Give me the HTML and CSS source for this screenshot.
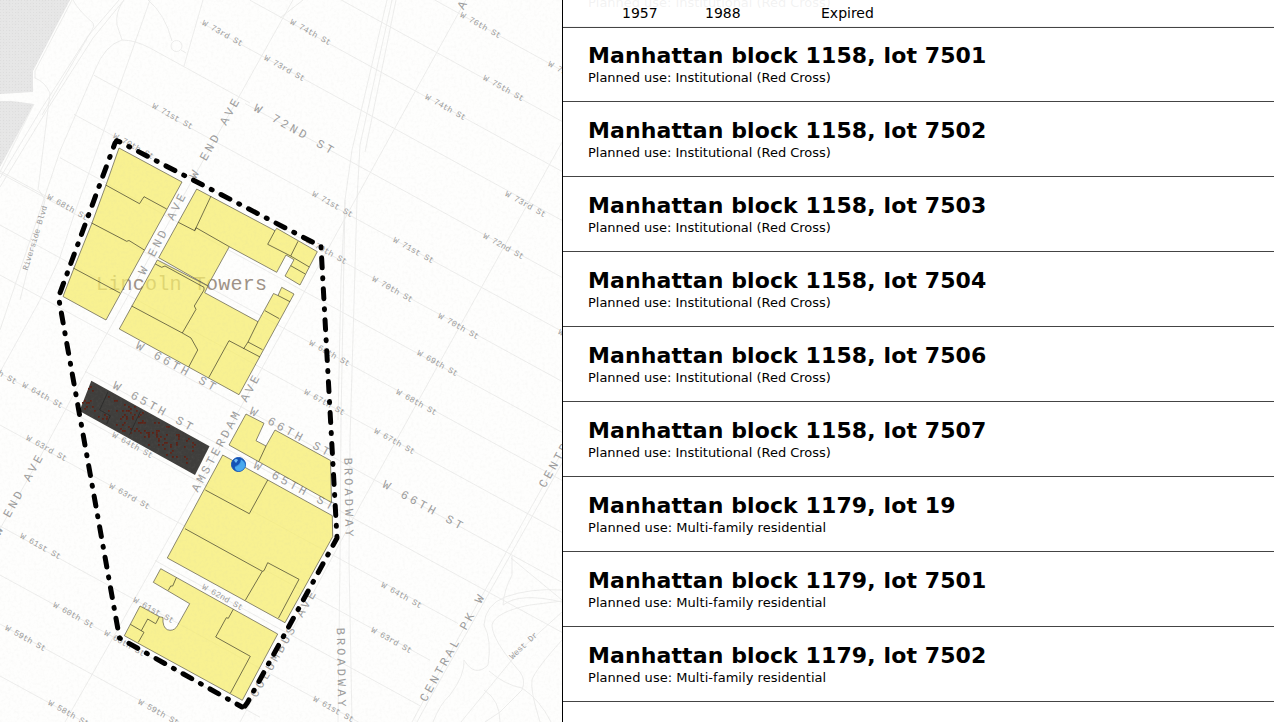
FILE: index.html
```html
<!DOCTYPE html>
<html lang="en">
<head>
<meta charset="utf-8">
<title>Lincoln Square urban renewal plan</title>
<link rel="stylesheet" href="styles.css">
</head>
<body>
<main class="page">
<section class="map">
<svg class="map-svg" viewBox="0 0 562 722" width="562" height="722">
  <defs>
    <filter id="grain" x="0" y="0" width="100%" height="100%">
      <feTurbulence type="fractalNoise" baseFrequency="0.35" numOctaves="2" seed="4"/>
      <feColorMatrix values="0 0 0 0 0.5  0 0 0 0 0.49  0 0 0 0 0.47  0.3 0 0 0 -0.13"/>
    </filter>
    <pattern id="hatch" width="3" height="3" patternUnits="userSpaceOnUse">
      <rect width="3" height="3" fill="#e7e7e7"/><rect width="1" height="1" fill="#dedede"/>
    </pattern>
    <radialGradient id="ball" cx=".6" cy=".65" r=".6"><stop offset=".5" stop-color="#3f9de6"/><stop offset="1" stop-color="#1764c4"/></radialGradient>
  </defs>
  <rect width="562" height="722" fill="#fefefd"/>
  <path fill="url(#hatch)" d="M0 0H70L33 71V92L0 94ZM0 101L12 101L34 104L0 167Z"/>
  <g class="roads" id="streets"></g>
  <g class="roads">
    <path d="M72 0L35 71V78Q45 82 50 93L38 190M34 104L0 172M124 0L93 38L47 110L0 187M119 0L88 36L42 108L0 178M73 0Q78 10 93 23Q95 26 92 30L42 115"/>
    <path d="M150 0L75 212L59 260L40 300L0 372M39 190L45 200L20 300M0 171L62 205M95 70L60 151L0 330M95 70Q105 45 122 40Q135 40 150 48L250 103M117 25L122 40M148 0Q165 14 172 41M203 0L184 66M117 25Q115 12 124 0"/>
    <circle cx="176.500" cy="46" r="5.500"/>
    <path d="M181 50L186 53"/>
    <path d="M303 -18L236 102L195 175L143 269L91 362L39 459L0 529M303 0L280 18M478 -22L463 5L380 155L256 379L197 488L110 643L65 722M562 142L505 245L362 502L312 595L256 693L240 722M562 452L425 698L412 722M566 456L429 700L417 722"/>
    <path d="M387 0L352 150L345 200L341 420L340 560L338 722M392 0L360 145L357 200L350 440L349 560L352 722M396 0L365 152M345 200L341 280L338 420"/>
    <path d="M511 558L562 600M512 556V575Q504 590 503 605Q520 592 562 602M562 590Q530 588 505 597Q485 605 484 625Q492 640 488 665Q475 678 464 660M464 660Q465 675 450 695Q440 704 433 722M562 612L520 650L461 722M492 625Q492 640 520 672Q526 680 522 690L500 712L485 722M484 690Q500 700 500 722M562 640Q535 670 532 680Q530 690 540 722M489 671Q505 685 522 688Q540 700 551 722M492 625Q495 612 530 605L562 601"/>
  </g>
  <g class="street-names" id="names"></g>
  <g class="avenue-names" id="avenues"></g>
  <text class="district" x="96" y="290" textLength="171">Lincoln Towers</text>

  <g class="lots">
    <path d="M119 148L182 182L106 320L63 296.500L74 268L92 223L106 185Z"/>
    <path d="M196.700 189L275 230.700L276.700 228.300L317.300 251.700L309.300 267L300 285L285 276L294 259.700L286 255L276.700 272.300L229.300 246.700L207.700 285.700L158.700 257.700Z"/>
    <path d="M157.300 260L208 286L204.700 292.700L258 321.700L273.500 293.500L278 295.500L281.700 287.300L294 294L239 394.700L119.300 329Z"/>
    <path d="M246 414L264 423.300L256 440.700L266 446L275 430L330.500 460.500L331.500 502.500L229 445Z"/>
    <path d="M222.700 455L332.300 515.700L332.700 536.700L285 622.700L167.300 558Z"/>
    <path d="M160.700 568.700L277.700 634L242.300 700.300L124.300 635.700L140 606L159.300 616.700L163 617.500V622Q164 630 170 630.300Q175 630.300 177.500 625.500L189.700 603.700L153.300 582.300Z"/>
  </g>
  <g class="lot-lines">
    <path d="M105.700 185L139.500 203.700L144 196.700L166.700 209M91.700 223L126.700 241.300L129 240.500L144.300 250M73.300 268L120 293"/>
    <path d="M178.300 222.300L194.700 230.700L196 227.700L229.300 246.700M211 196L194.700 230.700M275 230.700L267.700 244.300L290.700 256L298 241.300M290.700 256L309.300 267M290.700 265.700L305.300 274"/>
    <path d="M155.300 264L161.700 267.300L165 266L204 287.300V290L194.300 306L196 309.300L182.300 333M131.700 306L182.300 333L191 338L197.700 350L188.700 367M208.700 377.700L229 340.700L260 357M258 321.700L248 342L243.500 349M248 342L262.500 349.700M265 310.700L279.300 318.700M278 295.500L290 301.700"/>
    <path d="M266 446L258.700 461.700M205.300 490L249.300 513.700L267.700 480M185 528.700L262.300 571.300L264 570.700L267.700 562.700L299 579.300L278.500 618M262.300 571.300L245.300 600.300"/>
    <path d="M176.300 577.700L172.700 586H170.700L168.300 590.300M233.300 609.300L228.300 618.300L226.300 617.700L215.700 637L250.300 656.300L230.300 693.300M130.300 624.300L144 632.300L138.300 642.300M141.300 630.700L147.700 619L155.700 623.700L159.300 616.700"/>
  </g>
  <path class="lot-dark" d="M91.300 380.700L209.500 446.300L195 475L79.500 411Z"/>
  <g id="specks" class="specks"></g>
  <path class="lot-dark-lines" d="M108 391.700L99.700 410L110.300 415.700L106.700 424M140.300 411.700L129.300 435"/>
  <rect class="grain" width="562" height="722" filter="url(#grain)"/>
  <path class="boundary" stroke-dashoffset="6.500" d="M116.500 141L119 141.500L321 246.500L337 538L247.500 702.500L245 706"/>
  <path class="boundary" stroke-dashoffset="4.300" d="M242 707L119.500 638L58.500 297L115 143L117 141"/>
  <g class="marker">
    <circle cx="238.500" cy="464.500" r="7" fill="#1553b5" stroke="#1553b5"/>
    <path fill="url(#ball)" d="M235 466Q241 465 240 459Q246 460 245.500 466Q243 472 237.500 471Q233 470 235 466Z"/>
    <path fill="#49a9ee" d="M235 467Q242 466 241 459.500Q246 463 244.500 467Q242 471 238 471Q235 470 235 467Z"/>
    <path fill="#6fbcf5" d="M234 460.500Q236 458 238 460L236 463Z"/>
  </g>
</svg>
</section>
<section class="panel">
  <header class="plan-head"><span>1957</span><span>1988</span><span>Expired</span></header>
  <div class="lot-list">
    <article class="lot"><p>Planned use: Institutional (Red Cross)</p></article>
    <article class="lot"><h2>Manhattan block 1158, lot 7501</h2><p>Planned use: Institutional (Red Cross)</p></article>
    <article class="lot"><h2>Manhattan block 1158, lot 7502</h2><p>Planned use: Institutional (Red Cross)</p></article>
    <article class="lot"><h2>Manhattan block 1158, lot 7503</h2><p>Planned use: Institutional (Red Cross)</p></article>
    <article class="lot"><h2>Manhattan block 1158, lot 7504</h2><p>Planned use: Institutional (Red Cross)</p></article>
    <article class="lot"><h2>Manhattan block 1158, lot 7506</h2><p>Planned use: Institutional (Red Cross)</p></article>
    <article class="lot"><h2>Manhattan block 1158, lot 7507</h2><p>Planned use: Institutional (Red Cross)</p></article>
    <article class="lot residential"><h2>Manhattan block 1179, lot 19</h2><p>Planned use: Multi-family residential</p></article>
    <article class="lot residential"><h2>Manhattan block 1179, lot 7501</h2><p>Planned use: Multi-family residential</p></article>
    <article class="lot residential"><h2>Manhattan block 1179, lot 7502</h2><p>Planned use: Multi-family residential</p></article>
  </div>
</section>
</main>
<script src="map.js"></script>
</body>
</html>
```

FILE: styles.css
```css
* { box-sizing: border-box; }
body { margin: 0; background: #fff; color: #000; font-family: "DejaVu Sans", sans-serif; }
.page { display: flex; width: 100%; height: 722px; overflow: hidden; }
.map { flex: 0 0 562px; overflow: hidden; }
.map-svg { display: block; }

.roads { fill: none; stroke: #ebebea; stroke-width: 0.9; }
.street-names text { font: 8.4px "Liberation Mono", monospace; fill: #9c9c9c; text-anchor: middle; dominant-baseline: central; }
.avenue-names text { font: 12px "Liberation Mono", monospace; letter-spacing: 3.05px; fill: #9c9c9c; text-anchor: middle; dominant-baseline: central; }
.district { font: 20px "Liberation Mono", monospace; fill: #9e9287; }
.lots path { fill: rgba(245, 236, 106, 0.74); stroke: #5a5748; stroke-width: 0.7; }
.lot-lines { fill: none; stroke: #3b3928; stroke-width: 0.7; }
.lot-dark { fill: #3f3e3c; }
.lot-dark-lines { fill: none; stroke: #2a2a29; stroke-width: 0.9; }
.specks { fill: #5e2013; }
.grain { opacity: 0.5; pointer-events: none; }
.boundary { fill: none; stroke: #000; stroke-width: 5; stroke-linecap: round; stroke-linejoin: round; stroke-dasharray: 10 10 1 10; }

.panel { position: relative; flex: 1; overflow: hidden; border-left: 1px solid #000; background: #fff; }
.plan-head {
  position: absolute; top: 0; left: 0; right: 0; height: 28px;
  display: grid; grid-template-columns: 83px 116px auto; align-items: start;
  padding: 5px 0 0 59px; border-bottom: 1px solid #444;
  background: rgba(255, 255, 255, 0.95); font-size: 14px; line-height: 16px;
}
.lot-list { margin-top: -48px; }
.lot { display: flex; flex-direction: column; justify-content: flex-end; height: 75px; padding: 0 25px 15px; border-bottom: 1px solid #444; }
.lot h2 { margin: 0; font-size: 22px; line-height: 26px; font-weight: bold; letter-spacing: 0.11px; }
.lot p { margin: 1px 0 0; font-size: 13px; line-height: 16px; letter-spacing: -0.03px; }
.lot.residential p { letter-spacing: 0.04px; }
```

FILE: map.js
```js
const NS = "http://www.w3.org/2000/svg";
function add(parent, tag, attrs, text) {
  const el = document.createElementNS(NS, tag);
  for (const k in attrs) el.setAttribute(k, attrs[k]);
  if (text) el.textContent = text;
  document.getElementById(parent).appendChild(el);
}

// Cross streets: y intercept, start x, end x
[[-237, 430, 562], [-186, 340, 562], [-136, 250, 562], [-87, 200, 562], [-30, 245, 562], [24, 94, 562],
 [74, 74, 562], [125, 60, 562], [173, 0, 562], [225, 0, 562], [275, 0, 562], [325, 85, 562],
 [373, 0, 458], [425, 0, 430], [476, 155, 420], [526, 0, 360], [575, 0, 260], [624, 0, 190], [676, 0, 90]
].forEach(([c, a, b]) => add("streets", "path", { d: `M${a} ${c + a * 0.545}L${b} ${c + b * 0.547}` }));

[["73rd", 222, 33], ["74th", 310, 32], ["73rd", 284, 68], ["76th", 480, 25], ["75th", 503, 88], ["74th", 445, 107],
 ["73rd", 525, 204], ["72nd", 503, 246], ["75th", 568, 74], ["71st", 332, 204], ["71st", 172, 116], ["70th", 133, 146],
 ["68th", 67, 207], ["70th", 326, 251], ["71st", 413, 250], ["70th", 392, 289], ["70th", 458, 326], ["69th", 437, 363],
 ["68th", 329, 353], ["68th", 416, 402], ["67th", 324, 402], ["67th", 394, 441], ["71st", 578, 342], ["64th", 42, 395],
 ["64th", -4, 371], ["64th", 132, 445], ["63rd", 46, 448], ["63rd", 129, 496], ["61st", 40, 546], ["61st", -18, 522],
 ["60th", 73, 615], ["59th", 25, 638], ["61st", 153, 610], ["62nd", 222, 597], ["60th", 124, 643], ["59th", 158, 712],
 ["58th", 68, 713], ["64th", 401, 595], ["63rd", 391, 640], ["61st", 333, 709]
].forEach(([n, x, y]) => add("names", "text", { transform: `translate(${x + 0.3} ${y + 0.7}) rotate(29)` }, `W ${n} St`));
add("names", "text", { transform: "translate(524 646) rotate(-43)" }, "West Dr");
add("names", "text", { transform: "translate(35 238) rotate(-73)", style: "font-size:8px" }, "Riverside Blvd");

[["W 72ND ST", 294, 130, 29.5], ["W END AVE", 215.5, 138.5, -60.6], ["W END AVE", 163, 234, -62.5], ["W 66TH ST", 176, 367, 29],
 ["W 65TH ST", 153, 407, 29], ["W 66TH ST", 290, 432.5, 28.5], ["W 65TH ST", 294, 486.5, 28.5], ["W 66TH ST", 423, 506, 28.7],
 ["BROADWAY", 348, 498, 89], ["BROADWAY", 340.5, 668, 89], ["AMSTERDAM AVE", 226.5, 433.5, -61.6], ["W END AVE", 19, 495, -61],
 ["COLUMBUS AVE", 284, 644, -60.3], ["CENTRAL PK W", 453, 648, -60.8], ["CENTRAL PK W", 572, 434, -60.8], ["A", 463, 5, -60]
].forEach(([t, x, y, r]) => add("avenues", "text", { transform: `translate(${x} ${y}) rotate(${r})`, dx: 0.8 }, t));

// Rubble texture on the demolished block
let seed = 17;
const rnd = () => (seed = (seed * 16807) % 2147483647) / 2147483647;
let d = "";
for (let i = 0; i < 120; i++) {
  const u = i < 28 ? rnd() * 0.4 : 0.3 + rnd() * 0.6, v = 0.06 + rnd() * 0.84;
  const x = Math.round((91 + 118 * u - 13 * v) / 2) * 2, y = Math.round((381 + 65.5 * u + 29 * v) / 2) * 2;
  d += `M${x} ${y}h1.800v1.800h-1.800z`;
}
add("specks", "path", { d });
```
